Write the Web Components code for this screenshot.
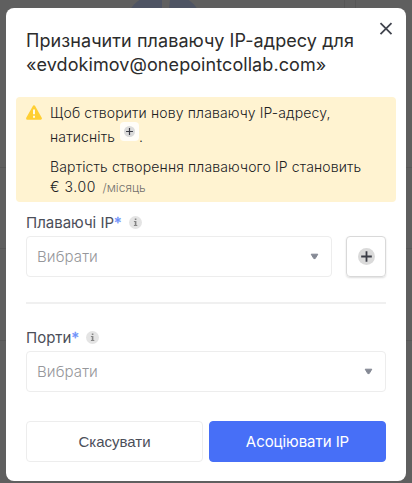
<!DOCTYPE html>
<html lang="uk">
<head>
<meta charset="utf-8">
<title>Плаваючі IP</title>
<style>
html,body{margin:0;height:100%;overflow:hidden;background:#5f5f5f}
body{font-family:Inter,"Liberation Sans",sans-serif;color:#2e2f33}
</style>
</head>
<body>
<ip-backdrop>
<ip-dialog>
<ip-title slot="title"></ip-title>
<ip-notice></ip-notice>
<ip-field label="Плаваючі IP" class="first"><ip-add slot="action"></ip-add></ip-field>
<ip-rule></ip-rule>
<ip-field label="Порти"></ip-field>
<ip-actions><ip-button>Скасувати</ip-button><ip-button primary>Асоціювати IP</ip-button></ip-actions>
</ip-dialog>
</ip-backdrop>
<script>
const plus = '<svg viewBox="0 0 16 16"><circle cx="8" cy="8" r="8" fill="#dadada"/><path d="M8 3v10M3 8h10" stroke="#3b3d46" stroke-width="1.7"/></svg>';
function define(name, html) {
  customElements.define(name, class extends HTMLElement {
    constructor() {
      super();
      const t = document.createElement('template');
      t.innerHTML = html;
      this.attachShadow({mode: 'open'}).append(t.content.cloneNode(true));
    }
    connectedCallback() {
      const l = this.shadowRoot.querySelector('[data-label]');
      if (l) l.textContent = this.getAttribute('label');
    }
  });
}
define('ip-backdrop', `<style>
:host{display:block;position:relative;box-sizing:border-box;height:483px;padding:8px 6px 2px;background:#5f5f5f;overflow:hidden}
svg{position:absolute;left:0;top:0;width:412px;height:483px}
</style><svg viewBox="0 0 412 483"><circle cx="164" cy="34" r="42" fill="#4e5463"/><path d="M162 -9h9l-2 18h-7z" fill="#5f5f5f"/><path d="M344.5 0v9M355.5 0v9M0 167.5h7M405 167.5h7M0 248.5h7M405 248.5h7M0 340.5h7M405 340.5h7" stroke="#575757" fill="none"/></svg><slot></slot>`);
define('ip-dialog', `<style>
:host{display:flex;flex-direction:column;position:relative;box-sizing:border-box;width:400px;height:473px;padding:21px 20px 0;background:#fff;border-radius:8px}
.close{position:absolute;left:373px;top:14px;width:14px;height:14px}
</style><slot name="title"></slot><svg class="close" viewBox="0 0 14 14"><path d="M1.5 1.2l11 11M12.5 1.2l-11 11" stroke="#41444e" stroke-width="1.8" fill="none"/></svg><slot></slot>`);
define('ip-title', `<style>
:host{display:block;height:67.5px;font-size:18px;line-height:24px;color:#2c2c2c;white-space:nowrap;letter-spacing:.075px}
</style><div>Призначити плаваючу IP-адресу для</div><div>«evdokimov@onepointcollab.com»</div>`);
define('ip-notice', `<style>
:host{display:flex;box-sizing:border-box;height:105.5px;margin:0 -10px;padding:6.5px 0 0 10px;gap:8px;background:#fff3d1;border-radius:4px;font-size:14px;font-weight:300;line-height:20px;color:#20211f;letter-spacing:.14px;white-space:nowrap}
.warn{width:16px;height:15px;margin-top:2px;flex:none}
.row{display:flex;height:20px}.second{height:24px;margin-top:3px;line-height:22px}
.chip{display:flex;width:19px;height:19px;margin-left:5px;margin-top:-4px;background:#fffdf8;border-radius:4px;align-items:center;justify-content:center}
.chip svg{width:11px;height:11px}
.cost{margin-top:7px}
.price{letter-spacing:.6px}
small{font-size:12px;color:#72706c;margin-left:6.5px;letter-spacing:0;line-height:21px}
</style><svg class="warn" viewBox="0 0 16 15"><path d="M8 1.6L14.6 13.4H1.4z" fill="#ffcf33" stroke="#ffcf33" stroke-width="2.6" stroke-linejoin="round"/><path d="M8 4.6v4.7M8 10.8v1.9" stroke="#fff" stroke-width="1.8"/></svg>
<div><div class="row"><span>Щоб створити нову плаваючу IP-адресу,</span></div><div class="row second"><span>натисніть</span><span class="chip">${plus}</span><span>.</span></div><div class="row cost"><span>Вартість створення плаваючого IP становить</span></div><div class="row"><span class="price">€ 3.00</span><small>/місяць</small></div></div>`);
define('ip-field', `<style>
:host{display:block}:host(.first){margin-top:11px}
.label{display:flex;height:20px;line-height:20px;font-size:15px;color:#4b4e59;white-space:nowrap;margin-bottom:3px}
.star{color:#6f91fa;-webkit-text-stroke:.3px #6f91fa}.info{width:13px;height:13px;margin:3px 0 0 7.3px}
.row{display:flex;gap:14px}
.select{flex:1;box-sizing:border-box;height:40.5px;border:1.5px solid #ededed;border-radius:4px;display:flex;align-items:center;justify-content:space-between;padding:0 12px 0 10px;font-size:15px;font-weight:300;color:#96979b;letter-spacing:.1px}
.select svg{width:9px;height:7px}
</style><div class="label"><span data-label></span><span class="star">*</span><svg class="info" viewBox="0 0 13 13"><circle cx="6.5" cy="6.5" r="6.5" fill="#e4e4e4"/><path d="M5.8 2.5h1.6v1.5H5.8zM5.8 5h1.6v5H5.8zM4.9 5h1v.9h-1zM4.9 9.1h3.4v.9H4.9z" fill="#858585"/></svg></div><div class="row"><div class="select"><span>Вибрати</span><svg viewBox="0 0 9 7"><path d="M1.2 1.2h6.6L5.2 5.6H3.8z" fill="#858994" stroke="#858994" stroke-linejoin="round"/></svg></div><slot name="action"></slot></div>`);
define('ip-add', `<style>
:host{display:flex;box-sizing:border-box;width:40px;height:40.5px;border:1px solid #d9d9d9;border-radius:4px;align-items:center;justify-content:center;box-shadow:0 1px 2px #0002}
svg{width:17px;height:17px}
</style>${plus}`);
define('ip-rule', `<style>:host{display:block;height:2px;background:#f0f0f0;margin:25px 0 24.5px}</style>`);
define('ip-actions', `<style>:host{display:flex;gap:6px;margin-top:29.5px}</style><slot></slot>`);
define('ip-button', `<style>
:host{flex:1;display:flex;box-sizing:border-box;height:40.5px;align-items:center;justify-content:center;border:1.5px solid #ededed;border-radius:4px;font-family:"Liberation Sans",Arial,sans-serif;font-size:15px;color:#4b4e59;white-space:nowrap}
:host([primary]){background:#476ff7;border-color:#476ff7;color:#fff;font-family:Inter,sans-serif;letter-spacing:-.05px}
</style><slot></slot>`);
</script>
</body>
</html>
